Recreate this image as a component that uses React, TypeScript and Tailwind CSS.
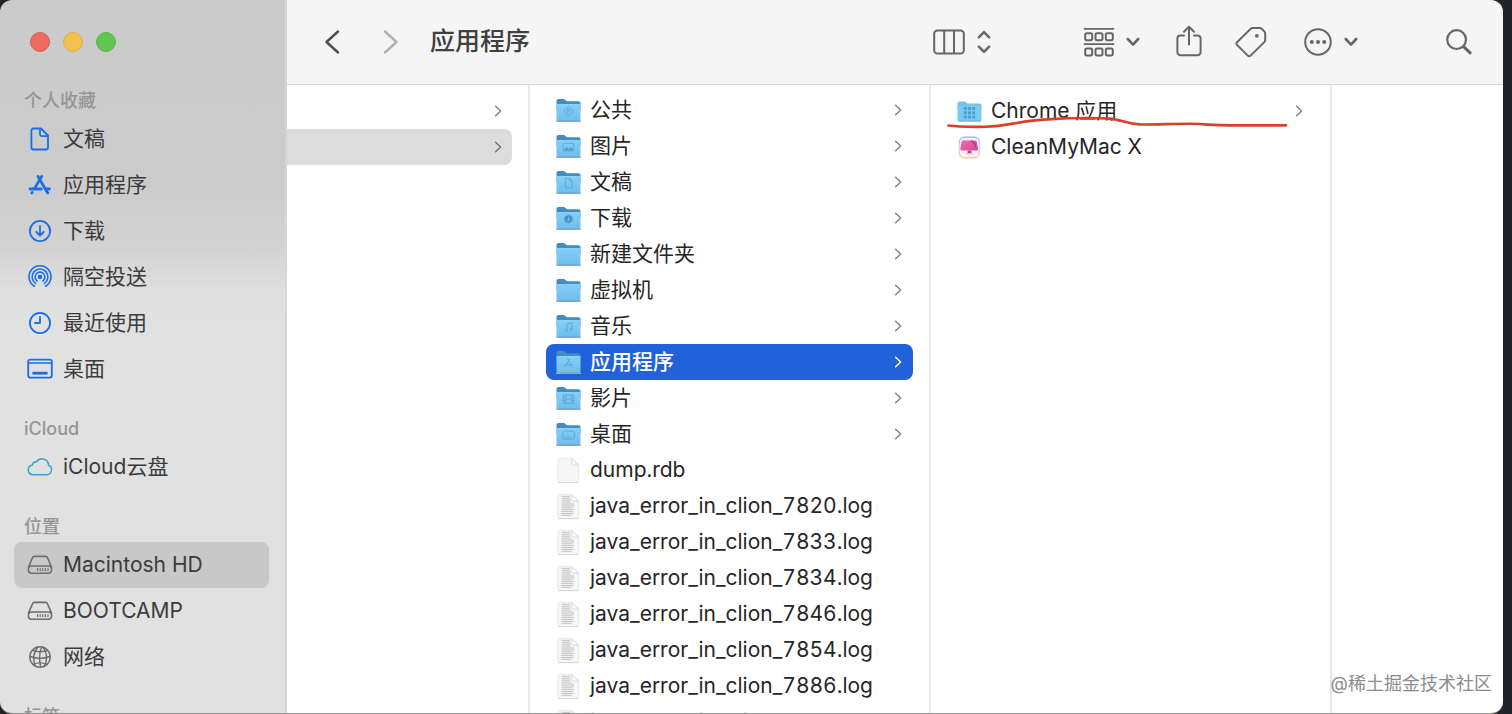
import type { ReactNode } from "react";

const UI_FONT = "font-['Inter','Noto_Sans_CJK_SC',sans-serif]";

/* ---------- sidebar icons ---------- */

function SideIcon({ children, className }: { children: ReactNode; className: string }) {
  return (
    <svg
      viewBox="0 0 28 28"
      className={`size-7 shrink-0 ${className}`}
      fill="none"
      stroke="currentColor"
      strokeWidth="1.8"
      strokeLinecap="round"
      strokeLinejoin="round"
      aria-hidden="true"
    >
      {children}
    </svg>
  );
}

const documentIcon = (
  <>
    <path d="M7.4 3.5h7.6l7 7v12a2 2 0 0 1-2 2H7.4a2 2 0 0 1-2-2v-17a2 2 0 0 1 2-2z" />
    <path d="M14 4v5.6a1.5 1.5 0 0 0 1.5 1.5h6" />
  </>
);
const appsIcon = (
  <g strokeWidth="2.8">
    <path d="M11.9 5.4l9.8 16.6" />
    <path d="M15.7 5.4L8.6 17.4" />
    <path d="M4 18h11.2M20.8 18h2.6" />
    <path d="M6.2 21.4l-.4.7" />
  </g>
);
const downloadIcon = (
  <>
    <circle cx="14" cy="14" r="10.1" />
    <path d="M14 9v9.4M10.4 15l3.6 3.6 3.6-3.6" />
  </>
);
const airdropIcon = (
  <g strokeWidth="1.6">
    <path d="M8.4 23.2a11 11 0 1 1 11.2 0" />
    <path d="M9.6 20.4a7.9 7.9 0 1 1 8.8 0" />
    <path d="M11 17.9a4.9 4.9 0 1 1 6 0" />
    <circle cx="14" cy="14" r="1.5" fill="currentColor" />
  </g>
);
const clockIcon = (
  <>
    <circle cx="14" cy="14" r="10.1" />
    <path d="M14 7.8V14H9" />
  </>
);
const desktopIcon = (
  <>
    <rect x="2.2" y="4.6" width="23.6" height="18" rx="2" />
    <path d="M2.6 8h23" strokeWidth="1.5" />
    <path d="M6.4 18.2h15.2" strokeWidth="2.8" strokeLinecap="butt" />
  </>
);
const cloudIcon = (
  <path
    strokeWidth="1.5"
    d="M7 21.8a5 5 0 0 1-.7-9.9 4 4 0 0 1 4.3-3.2 6.6 6.6 0 0 1 12 3.6 5 5 0 0 1-1.6 9.5z"
  />
);
const driveIcon = (
  <g strokeWidth="1.6">
    <path d="M8.4 5.4h11.2a2 2 0 0 1 1.9 1.3l3.7 8.7a3 3 0 0 1 .3 1.3v2.6a3 3 0 0 1-3 3h-17a3 3 0 0 1-3-3v-2.6a3 3 0 0 1 .3-1.3l3.7-8.7a2 2 0 0 1 1.9-1.3z" />
    <path d="M3 16.2a3 3 0 0 1 2.2-1.2h17.6a3 3 0 0 1 2.2 1.2" />
    <path d="M11.6 17.6v2M14.2 17.6v2M16.8 17.6v2M19.4 17.6v2M22 17.6v2" strokeWidth="1.2" />
  </g>
);
const globeIcon = (
  <g strokeWidth="1.4">
    <circle cx="14" cy="14" r="10.2" />
    <path d="M4 13.5c6 2.2 14 2.2 20 0M6.6 7.4c4.8 1.8 10 1.8 14.8 0M7 21.4c4.6-2 9.4-2 14 0" />
    <path d="M15.6 4c-2.4 6-2.4 13.4-1 20M12 4c-4.8 5-5.6 13-2.6 19.2M16.4 4c5 5 5.4 13.4 1.6 19.4" />
  </g>
);

type SideEntry = { label: string; icon: ReactNode; color: string; active?: boolean };

const BLUE = "text-[#1a6fe8]";
const GRAY = "text-[#6e6e6e]";

const sections: { title: string; entries: SideEntry[] }[] = [
  {
    title: "个人收藏",
    entries: [
      { label: "文稿", icon: documentIcon, color: BLUE },
      { label: "应用程序", icon: appsIcon, color: BLUE },
      { label: "下载", icon: downloadIcon, color: BLUE },
      { label: "隔空投送", icon: airdropIcon, color: BLUE },
      { label: "最近使用", icon: clockIcon, color: BLUE },
      { label: "桌面", icon: desktopIcon, color: BLUE },
    ],
  },
  {
    title: "iCloud",
    entries: [{ label: "iCloud云盘", icon: cloudIcon, color: "text-[#3d9fd0]" }],
  },
  {
    title: "位置",
    entries: [
      { label: "Macintosh HD", icon: driveIcon, color: GRAY, active: true },
      { label: "BOOTCAMP", icon: driveIcon, color: GRAY },
      { label: "网络", icon: globeIcon, color: GRAY },
    ],
  },
  { title: "标签", entries: [] },
];

function Sidebar() {
  return (
    <aside className="flex w-[287px] shrink-0 flex-col overflow-hidden border-r-2 border-[#d6d6d6] bg-[linear-gradient(to_bottom,#cbcbcb_0px,#cccccc_190px,#d3d3d3_250px,#dfdfdf_290px,#e1e1e1_320px)]">
      <div className="flex shrink-0 gap-[13px] px-[30px] pt-8 pb-[34px]">
        <button aria-label="关闭" className="size-5 rounded-full border border-[#d9605a] bg-[#ec6a5f]" />
        <button aria-label="最小化" className="size-5 rounded-full border border-[#dfae4c] bg-[#f5bf4f]" />
        <button aria-label="缩放" className="size-5 rounded-full border border-[#57b44b] bg-[#61c554]" />
      </div>
      <nav className="flex flex-col gap-[22px]">
        {sections.map((section) => (
          <section key={section.title}>
            <h2 className="pl-6 text-[18px] leading-[30px] font-medium text-[#959595]">{section.title}</h2>
            <ul>
              {section.entries.map((entry) => (
                <li key={entry.label} className="pr-4 pl-[14px]">
                  <a
                    href="#"
                    className={`flex h-[46px] items-center gap-[9px] rounded-lg pl-3 text-[21px] text-[#3b3b3b] ${
                      entry.active ? "bg-[#c8c8c8]" : ""
                    }`}
                  >
                    <SideIcon className={entry.color}>{entry.icon}</SideIcon>
                    {entry.label}
                  </a>
                </li>
              ))}
            </ul>
          </section>
        ))}
      </nav>
    </aside>
  );
}

/* ---------- toolbar ---------- */

function DownChevron() {
  return (
    <svg viewBox="0 0 14 10" className="h-[10px] w-[14px]" fill="none" stroke="currentColor" strokeWidth="2.6" strokeLinecap="round" strokeLinejoin="round" aria-hidden="true">
      <path d="M1.8 2l5.2 5.6L12.2 2" />
    </svg>
  );
}

function Toolbar() {
  return (
    <header className="flex h-[85px] shrink-0 items-center border-b border-[#d8d8d8] bg-[#f5f5f5] pr-[30px] pb-px pl-9 text-[#666666]">
      <button aria-label="后退" className="text-[#4d4d4d]">
        <svg viewBox="0 0 18 26" className="h-[26px] w-[18px]" fill="none" stroke="currentColor" strokeWidth="2.4" strokeLinecap="round" strokeLinejoin="round" aria-hidden="true">
          <path d="M15 2.5L3.5 13 15 23.5" />
        </svg>
      </button>
      <button aria-label="前进" className="ml-[41px] text-[#b0b0b0]">
        <svg viewBox="0 0 18 26" className="h-[26px] w-[18px]" fill="none" stroke="currentColor" strokeWidth="2.4" strokeLinecap="round" strokeLinejoin="round" aria-hidden="true">
          <path d="M3 2.5L14.5 13 3 23.5" />
        </svg>
      </button>
      <h1 className="ml-[30px] text-[25px] font-medium text-[#404040]">应用程序</h1>

      <button aria-label="显示方式" className="ml-auto flex items-center gap-3">
        <svg viewBox="0 0 32 26" className="h-[26px] w-8" fill="none" stroke="currentColor" strokeWidth="2" aria-hidden="true">
          <rect x="1.2" y="1.4" width="29.6" height="23.2" rx="3.2" />
          <path d="M11.2 1.4v23.2M21 1.4v23.2" />
        </svg>
        <svg viewBox="0 0 14 24" className="h-6 w-[14px]" fill="none" stroke="currentColor" strokeWidth="2.5" strokeLinecap="round" strokeLinejoin="round" aria-hidden="true">
          <path d="M1.8 7.4L7 2.2l5.2 5.2M1.8 16.6L7 21.8l5.2-5.2" />
        </svg>
      </button>
      <button aria-label="分组" className="ml-[92px] flex items-center gap-[11px]">
        <svg viewBox="0 0 32 30" className="h-[30px] w-8" fill="none" stroke="currentColor" strokeWidth="2" aria-hidden="true">
          <path d="M1.5 1.8h29M1.5 17.1h29" strokeLinecap="round" strokeWidth="1.8" />
          <rect x="2.2" y="6.2" width="7" height="7" rx="1.6" />
          <rect x="12.5" y="6.2" width="7" height="7" rx="1.6" />
          <rect x="22.8" y="6.2" width="7" height="7" rx="1.6" />
          <rect x="2.2" y="21.4" width="7" height="7" rx="1.6" />
          <rect x="12.5" y="21.4" width="7" height="7" rx="1.6" />
          <rect x="22.8" y="21.4" width="7" height="7" rx="1.6" />
        </svg>
        <DownChevron />
      </button>
      <button aria-label="共享" className="ml-9">
        <svg viewBox="0 0 26 34" className="h-[34px] w-[26px]" fill="none" stroke="currentColor" strokeWidth="2" strokeLinecap="round" strokeLinejoin="round" aria-hidden="true">
          <path d="M8 10.4H4.4a3 3 0 0 0-3 3v13.8a3 3 0 0 0 3 3h17.2a3 3 0 0 0 3-3V13.4a3 3 0 0 0-3-3H18" />
          <path d="M13 19.6V2M8 6.8l5-5 5 5" />
        </svg>
      </button>
      <button aria-label="标签" className="ml-[33px]">
        <svg viewBox="0 0 32 32" className="size-8" fill="none" stroke="currentColor" strokeWidth="2" strokeLinejoin="round" aria-hidden="true">
          <path d="M2 16.2L15.6 2.9a3 3 0 0 1 2.1-.9h7a3 3 0 0 1 2 .8l2.6 2.6a3 3 0 0 1 .9 2V14a3 3 0 0 1-.9 2.1L15.6 29.6a2 2 0 0 1-2.8 0L2 18.9a1.9 1.9 0 0 1 0-2.7z" />
          <circle cx="21.8" cy="9.8" r="1.9" fill="currentColor" stroke="none" />
        </svg>
      </button>
      <button aria-label="更多" className="ml-9 flex items-center gap-[11px]">
        <svg viewBox="0 0 30 30" className="size-[30px]" fill="none" stroke="currentColor" strokeWidth="2" aria-hidden="true">
          <circle cx="15" cy="15" r="12.8" />
          <g fill="currentColor" stroke="none">
            <circle cx="8.8" cy="15" r="2" />
            <circle cx="15" cy="15" r="2" />
            <circle cx="21.2" cy="15" r="2" />
          </g>
        </svg>
        <DownChevron />
      </button>
      <button aria-label="搜索" className="ml-[87px]">
        <svg viewBox="0 0 28 28" className="size-7" fill="none" stroke="currentColor" strokeLinecap="round" aria-hidden="true">
          <circle cx="11.6" cy="11.6" r="9.4" strokeWidth="2.2" />
          <path d="M18.8 18.8l6.4 6" strokeWidth="3" />
        </svg>
      </button>
    </header>
  );
}

/* ---------- file icons ---------- */

const glyphs: Record<string, ReactNode> = {
  public: (
    <>
      <path d="M12.5 8.6l4.8 4.6-4.8 4.8-4.8-4.8z" />
      <path d="M11.6 15.2v-3.6h1.8v1.6" />
    </>
  ),
  pictures: (
    <>
      <rect x="7.2" y="9.4" width="10.6" height="7.6" />
      <path d="M7.8 16.6l3-3.4 2 2.2 2-2.2 2.8 3.4z" fill="#4b9dcc" />
    </>
  ),
  documents: <path d="M9.4 8.4h4.2l2.6 2.6v6.8H9.4zM13.4 8.6v2.6h2.6" />,
  downloads: (
    <>
      <circle cx="12.5" cy="13" r="4" fill="#3f93c4" />
      <path d="M12.5 10.8v4M11 13.4l1.5 1.6 1.5-1.6" stroke="#7cc6f0" />
    </>
  ),
  music: (
    <>
      <path d="M11 16.4V10l5-1.2v6.4" />
      <circle cx="10" cy="16.6" r="1" />
      <circle cx="15" cy="15.4" r="1" />
    </>
  ),
  apps: <path d="M11.6 8.6l4.6 8.6M13.6 8.6L9 17.2M8 14.8h9.2" />,
  movies: (
    <>
      <rect x="7.4" y="9" width="10.4" height="8.4" />
      <path d="M9.8 9v8.4M15.4 9v8.4M9.8 13.2h5.6M7.4 11.8h2.4M7.4 14.6h2.4M15.4 11.8h2.4M15.4 14.6h2.4" />
    </>
  ),
  desktop: (
    <>
      <rect x="6.8" y="9.2" width="11.6" height="8" rx="1" />
      <path d="M9.4 15.4h6.4" />
    </>
  ),
};

function FolderIcon({ glyph }: { glyph?: string }) {
  return (
    <svg viewBox="0 0 25 25" className="size-[25px] shrink-0" aria-hidden="true">
      <defs>
        <linearGradient id="folderFront" x1="0" y1="0" x2="0" y2="1">
          <stop offset="0" stopColor="#84cdf5" />
          <stop offset="1" stopColor="#70bdec" />
        </linearGradient>
      </defs>
      <path d="M.6 23.2h23.8" stroke="#9fb4c2" strokeWidth="1.4" strokeLinecap="round" />
      <path d="M.5 3A1.9 1.9 0 0 1 2.4 1.1h5.2c.8 0 1.2.3 1.8.9l.6.6c.4.4.9.6 1.5.6h11.1a1.9 1.9 0 0 1 1.9 1.9V12H.5z" fill="#3f8ec6" />
      <path d="M.5 6.2h24v14.9a1.9 1.9 0 0 1-1.9 1.9H2.4a1.9 1.9 0 0 1-1.9-1.9z" fill="url(#folderFront)" />
      <path d="M.7 6.6h23.6" stroke="#98d8f8" strokeWidth=".8" />
      <path d="M1 22.2c.4.5.8.7 1.4.7h20.2c.6 0 1-.2 1.4-.7" stroke="#5ba3d0" strokeWidth=".9" fill="none" />
      <g fill="none" stroke="#5aa9d6" strokeWidth=".9" strokeLinejoin="round">
        {glyph ? glyphs[glyph] : null}
      </g>
    </svg>
  );
}

function FileIcon({ lined }: { lined?: boolean }) {
  return (
    <svg viewBox="0 0 25 27" className="h-[27px] w-[25px] shrink-0" aria-hidden="true">
      <path d="M3.6 1.4h12.2L22.6 8v16a1.6 1.6 0 0 1-1.6 1.6H3.6A1.6 1.6 0 0 1 2 24V3a1.6 1.6 0 0 1 1.6-1.6z" fill="#f6f6f6" stroke="#e8e8e8" strokeWidth=".9" />
      <path d="M2.6 25.6h19.4" stroke="#d2d2d2" strokeWidth=".9" />
      <path d="M15.8 1.6v4.8A1.6 1.6 0 0 0 17.4 8h5z" fill="#ffffff" stroke="#d0d0d0" strokeWidth=".8" />
      {lined ? (
        <path
          d="M6 3.4h8M6 5.3h8M6 7.2h8.6M5.6 9.1h9M5.6 11h12.4M5.6 12.9h12.4M5.6 14.8h11M5.6 16.7h12.4M5.6 18.6h11.4M5.6 20.5h12M5.6 22.4h10"
          stroke="#bcbcbc"
          strokeWidth=".9"
        />
      ) : null}
    </svg>
  );
}

function ChromeFolderIcon() {
  return (
    <svg viewBox="0 0 25 25" className="size-[25px] shrink-0" aria-hidden="true">
      <path d="M.5 4.4a1.8 1.8 0 0 1 1.8-1.8h4.9c.8 0 1.2.2 1.7.7l.7.6c.4.4.9.5 1.4.5h11.7a1.8 1.8 0 0 1 1.8 1.8V10H.5z" fill="#74c1e9" />
      <path d="M.5 6.8h24v13.8a1.8 1.8 0 0 1-1.8 1.8H2.3a1.8 1.8 0 0 1-1.8-1.8z" fill="#7bcaf4" />
      <path d="M1 22h23" stroke="#5faedb" strokeWidth=".9" />
      <g fill="#4f9fd3">
        <path d="M6.8 8h3v3h-3zM11 8h3v3h-3zM15.2 8h3v3h-3zM6.8 12.2h3v3h-3zM11 12.2h3v3h-3zM15.2 12.2h3v3h-3zM6.8 16.4h3v3h-3zM11 16.4h3v3h-3zM15.2 16.4h3v3h-3z" />
      </g>
    </svg>
  );
}

function CleanMyMacIcon() {
  return (
    <svg viewBox="0 0 25 25" className="size-[25px] shrink-0" aria-hidden="true">
      <defs>
        <linearGradient id="cmmRim" x1="0" y1="0" x2="0" y2="1">
          <stop offset="0" stopColor="#9dbcf5" />
          <stop offset=".5" stopColor="#e6cdf0" />
          <stop offset="1" stopColor="#f2cf9f" />
        </linearGradient>
        <linearGradient id="cmmScreen" x1="0" y1="0" x2="1" y2="1">
          <stop offset="0" stopColor="#ec6fae" />
          <stop offset="1" stopColor="#d6438f" />
        </linearGradient>
      </defs>
      <rect x="2.4" y="2.3" width="20" height="20.4" rx="4.6" fill="#f8effa" stroke="url(#cmmRim)" strokeWidth="1.4" />
      <path d="M6 5.4h12.4a1.4 1.4 0 0 1 1.3 1l1.3 6.8a2 2 0 0 1-2 2.4H5.4a2 2 0 0 1-2-2.4l1.3-6.8a1.4 1.4 0 0 1 1.3-1z" fill="url(#cmmScreen)" />
      <path d="M13.6 6c2.8.2 4.6 1.6 5 5.6" fill="none" stroke="#8f3d83" strokeWidth="1.1" />
      <path d="M10.6 15.6h3.8v2.6h-3.8z" fill="#a04b92" />
      <path d="M9 18.8h7" stroke="#e3b4d6" strokeWidth="1.2" />
    </svg>
  );
}

/* ---------- columns ---------- */

function RowChevron({ className }: { className: string }) {
  return (
    <svg viewBox="0 0 8 12" className={`ml-auto h-3 w-2 shrink-0 ${className}`} fill="none" stroke="currentColor" strokeWidth="1.4" strokeLinecap="round" strokeLinejoin="round" aria-hidden="true">
      <path d="M1.6 1.2L6.6 6l-5 4.8" />
    </svg>
  );
}

type Row = { name: string; icon: ReactNode; folder?: boolean; selected?: boolean };

function FileRow({ row }: { row: Row }) {
  return (
    <li className="px-4">
      <button
        className={`flex h-9 w-full items-center gap-[9px] rounded-lg pr-[11px] pl-[10px] text-left text-[21px] whitespace-nowrap tabular-nums ${
          row.selected ? "bg-[#2161d9] font-medium text-white" : "text-[#262626]"
        }`}
      >
        {row.icon}
        <span>{row.name}</span>
        {row.folder ? <RowChevron className={row.selected ? "text-white" : "text-[#808080]"} /> : null}
      </button>
    </li>
  );
}

const homeFolders: [string, string | undefined][] = [
  ["公共", "public"],
  ["图片", "pictures"],
  ["文稿", "documents"],
  ["下载", "downloads"],
  ["新建文件夹", undefined],
  ["虚拟机", undefined],
  ["音乐", "music"],
  ["应用程序", "apps"],
  ["影片", "movies"],
  ["桌面", "desktop"],
];

const logNumbers = ["7820", "7833", "7834", "7846", "7854", "7886", "7901"];

const homeRows: Row[] = [
  ...homeFolders.map(([name, glyph]) => ({
    name,
    icon: <FolderIcon glyph={glyph} />,
    folder: true,
    selected: name === "应用程序",
  })),
  { name: "dump.rdb", icon: <FileIcon /> },
  ...logNumbers.map((n) => ({ name: `java_error_in_clion_${n}.log`, icon: <FileIcon lined /> })),
];

const appRows: Row[] = [
  { name: "Chrome 应用", icon: <ChromeFolderIcon />, folder: true },
  { name: "CleanMyMac X", icon: <CleanMyMacIcon /> },
];

function Columns() {
  return (
    <main className="flex min-h-0 flex-1 bg-white">
      <ul className="w-[243px] shrink-0 border-r-2 border-[#e8e8e8] pt-2">
        <li className="pr-4">
          <button aria-label="上级文件夹" className="flex h-9 w-full items-center pr-[10px]">
            <RowChevron className="text-[#808080]" />
          </button>
        </li>
        <li className="pr-4">
          <button aria-label="个人文件夹" className="flex h-9 w-full items-center rounded-r-lg bg-[#dcdcdc] pr-[10px]">
            <RowChevron className="text-[#707070]" />
          </button>
        </li>
      </ul>
      <ul className="w-[401px] shrink-0 overflow-hidden border-r-2 border-[#e8e8e8] pt-[7px]">
        {homeRows.map((row) => (
          <FileRow key={row.name} row={row} />
        ))}
      </ul>
      <div className="relative w-[401px] shrink-0 border-r-2 border-[#e8e8e8] pt-2">
        <ul>
          {appRows.map((row) => (
            <FileRow key={row.name} row={row} />
          ))}
        </ul>
        <svg viewBox="0 0 344 14" className="pointer-events-none absolute top-[30px] left-[15px] h-[14px] w-[344px]" fill="none" stroke="#dc3f27" strokeWidth="2.6" strokeLinecap="round" aria-hidden="true">
          <path d="M2.5 10.5C12 12 26 12 40 11.8 62 11 72 6 102 4.4c20-1.4 44-1.8 62-.8 10 1 18 5 30 5.8 14 .4 34-.8 52-.6 16 .4 20 1.6 38 1.6h56" />
        </svg>
      </div>
    </main>
  );
}

export default function App() {
  return (
    <div className={`h-screen overflow-hidden bg-[#20252b] pr-[9px] leading-normal ${UI_FONT}`}>
      <div className="relative flex h-full overflow-hidden rounded-xl border-b border-[#8f8f8f]">
        <Sidebar />
        <div className="flex min-w-0 flex-1 flex-col">
          <Toolbar />
          <Columns />
        </div>
        <p className="absolute right-[11px] bottom-4 text-[18px] leading-[27px] text-[#8c8c8c]">@稀土掘金技术社区</p>
      </div>
    </div>
  );
}
